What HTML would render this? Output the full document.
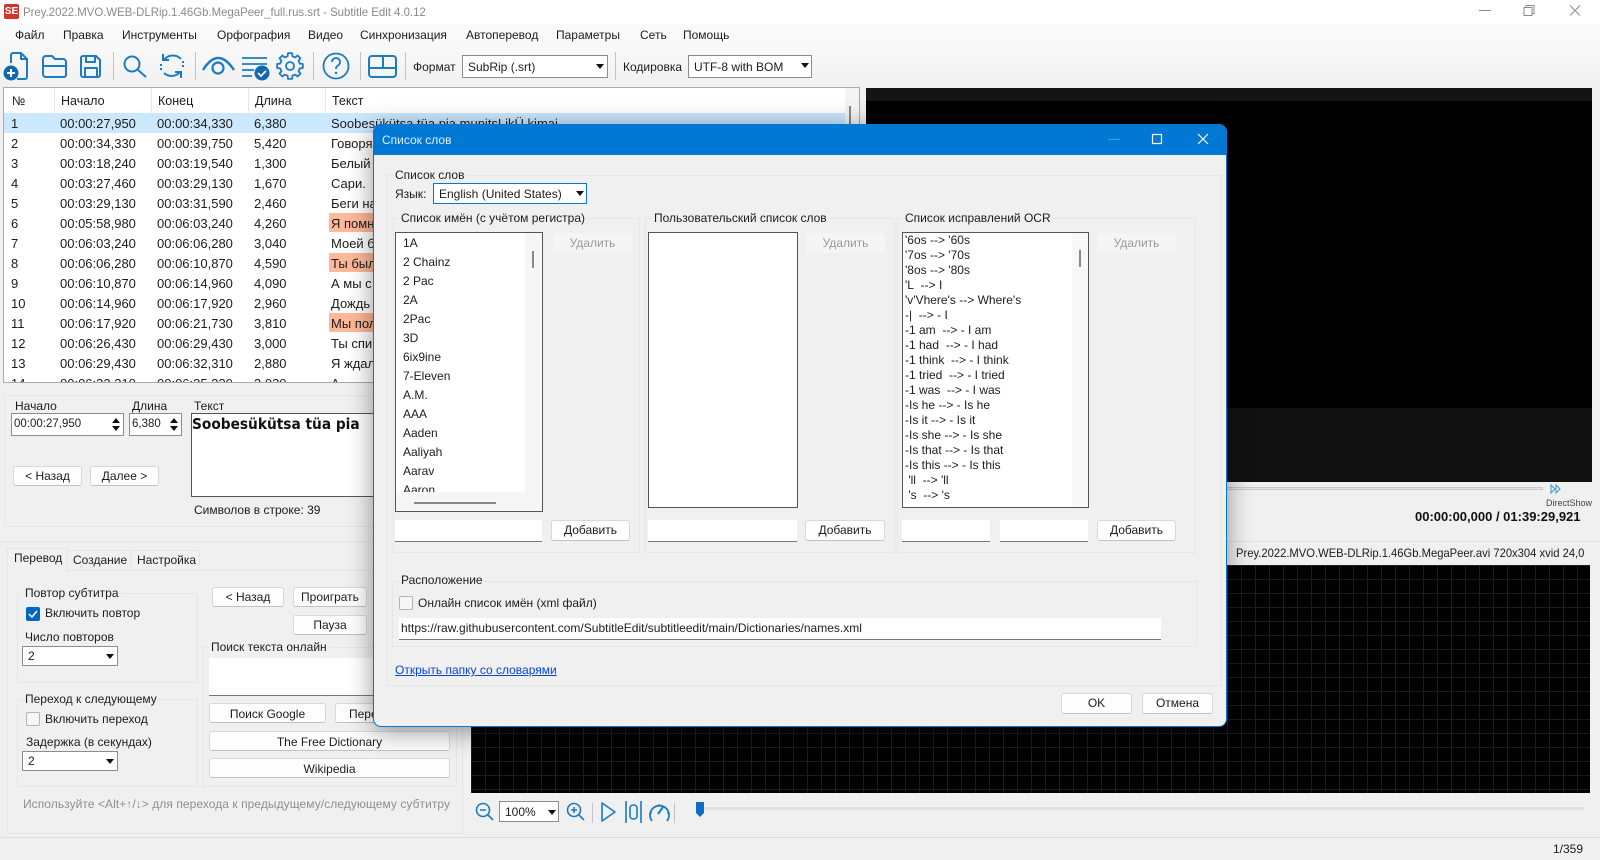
<!DOCTYPE html>
<html lang="ru"><head><meta charset="utf-8"><title>Subtitle Edit</title>
<style>
html,body{margin:0;padding:0;width:1600px;height:860px;overflow:hidden;background:#f0f0f0}
body{position:relative;font:12px "Liberation Sans","DejaVu Sans",sans-serif;color:#1c1c1c}
div,span{position:absolute;box-sizing:border-box}
.t{white-space:nowrap;line-height:16px;height:16px}
.lb{white-space:nowrap;line-height:16px;height:16px;background:#f0f0f0;padding:0 2px}
.b{background:#fdfdfd;border:1px solid #d8d8d8;border-bottom-color:#c2c2c2;border-radius:3px;text-align:center;white-space:nowrap;overflow:hidden}
.d{background:#f5f5f5;border-radius:3px;color:#9a9a9a;text-align:center;height:20px;line-height:20px;top:233px;width:79px}
.g{border:1px solid #e6e6e6}
.c{background:#fff;border:1px solid #8d8d8d;padding-left:5px;white-space:nowrap}
.a{width:0;height:0;border-left:4px solid transparent;border-right:4px solid transparent;border-top:5px solid #111}
.u{width:0;height:0;border-left:4px solid transparent;border-right:4px solid transparent;border-bottom:5px solid #111}
.i{background:#fff;border-bottom:1px solid #777}
.l{background:#fff;border:1px solid #555;overflow:hidden}
.cb{width:14px;height:14px;border:1px solid #b5b5b5;border-radius:2px;background:#f6f6f6}
.r{left:4px;width:841px;height:20px;font-size:13px}
.r span{white-space:nowrap;line-height:21px;top:0}
.r .n{left:7px}.r .s{left:56px}.r .e{left:153px}.r .m{left:250px}.r .x{left:327px}
.o{left:325px;width:516px;height:19px;background:#ffb899}
</style></head><body>

<!-- window title + gradient -->
<div style="left:0;top:0;width:1600px;height:24px;background:#fff"></div>
<div style="left:0;top:24px;width:1600px;height:64px;background:linear-gradient(#fbfbfb,#f6f6f6 60%,#f0f0f0)"></div>
<div style="left:4px;top:4px;width:15px;height:15px;background:#d5322c;border-radius:2px;color:#fff;font:bold 10px/15px 'Liberation Sans',sans-serif;text-align:center">SE</div>
<span class="t" style="left:23px;top:4px;color:#8a8a8a;font-size:12px;transform-origin:0 0;transform:scaleX(.95)">Prey.2022.MVO.WEB-DLRip.1.46Gb.MegaPeer_full.rus.srt - Subtitle Edit 4.0.12</span>
<svg style="position:absolute;left:1470px;top:0" width="130" height="24" fill="none" stroke="#8a8a8a" stroke-width="1"><path d="M9 10.5H21"/><path d="M54 7.5h8v8h-8zM56 7.5V5.500h8v8h-2"/><path d="M100 5.500L110 15.500M110 5.500L100 15.500"/></svg>

<!-- menu -->
<span class="t" style="left:15px;top:27px">Файл</span>
<span class="t" style="left:63px;top:27px">Правка</span>
<span class="t" style="left:122px;top:27px">Инструменты</span>
<span class="t" style="left:217px;top:27px">Орфография</span>
<span class="t" style="left:308px;top:27px">Видео</span>
<span class="t" style="left:360px;top:27px">Синхронизация</span>
<span class="t" style="left:466px;top:27px">Автоперевод</span>
<span class="t" style="left:556px;top:27px">Параметры</span>
<span class="t" style="left:640px;top:27px">Сеть</span>
<span class="t" style="left:683px;top:27px">Помощь</span>

<!-- icons -->
<svg style="position:absolute;left:0;top:0" width="1600" height="860" fill="none" stroke="#1b7cc4" stroke-width="2">
<path d="M11 63V55a2 2 0 0 1 2-2h8l6 6v18a2 2 0 0 1-2 2h-8M21 53v6h6" stroke-linejoin="round"/>
<circle cx="11" cy="73" r="7.500" fill="#1268ae" stroke="none"/><path d="M7 73h8M11 69v8" stroke="#fff" stroke-width="2"/>
<path d="M43 74V59a3 3 0 0 1 3-3h6l3 3h8a3 3 0 0 1 3 3v13a2 2 0 0 1-2 2H46a3 3 0 0 1-3-3zM43 66h23" stroke-linejoin="round"/>
<path d="M81 58a2 2 0 0 1 2-2h13l4 4v15a2 2 0 0 1-2 2H83a2 2 0 0 1-2-2zM86 56v6h9v-6M85 77v-9h12v9" stroke-linejoin="round"/>
<circle cx="132" cy="64" r="7.500"/><path d="M138 70l8 7"/>
<path d="M164 60A11 11 0 0 1 181 59M180 72A11 11 0 0 1 164 73M163 54v6h6M181 78v-6h-6"/>
<path d="M161 64v7M183 61v7" stroke-dasharray="2 2"/>
<path d="M203 70Q218 46 234 70" stroke-width="2.400"/><circle cx="218" cy="68" r="5.500" stroke-width="2.200"/>
<path d="M242 58h25M242 64h25M242 70h12M242 76h10" stroke-width="1.800"/>
<circle cx="262" cy="73" r="7.500" fill="#1268ae" stroke="none"/><path d="M258 73l3 3 5-5" stroke="#fff" stroke-width="1.800"/>
<polygon transform="translate(290 66)" stroke-width="1.800" stroke-linejoin="round" points="12.84,-2.03 12.84,2.03 9.7,2.42 8.57,5.15 10.52,7.64 7.64,10.52 5.15,8.57 2.42,9.7 2.03,12.84 -2.03,12.84 -2.42,9.7 -5.15,8.57 -7.64,10.52 -10.52,7.64 -8.57,5.15 -9.7,2.42 -12.84,2.03 -12.84,-2.03 -9.7,-2.42 -8.57,-5.15 -10.52,-7.64 -7.64,-10.52 -5.15,-8.57 -2.42,-9.7 -2.03,-12.84 2.03,-12.84 2.42,-9.7 5.15,-8.57 7.64,-10.52 10.52,-7.64 8.57,-5.15 9.7,-2.42"/>
<circle cx="290" cy="66" r="4" stroke-width="1.800"/>
<circle cx="336" cy="66" r="12.500" stroke-width="1.800"/>
<path d="M332 62a4 4 0 1 1 6 3.500c-1.500 1-2 1.500-2 3.500" stroke-width="1.800"/><circle cx="336" cy="73" r="1.200" fill="#1b7cc4" stroke="none"/>
<rect x="369" y="56" width="27" height="21" rx="3"/><path d="M369 68h27M383 56v12"/>
<g stroke="#c4c4c4" stroke-width="1"><path d="M113.500 52v28M195.500 52v28M313.500 52v28M360.500 52v28M405.500 52v28M615.500 52v28M592.500 803v20M674.500 803v20"/></g>
<circle cx="483" cy="810" r="6.500" stroke-width="1.600"/><path d="M488 815l5 5M480 810h6" stroke-width="1.600"/>
<circle cx="574" cy="810" r="6.500" stroke-width="1.600"/><path d="M579 815l5 5M571 810h6M574 807v6" stroke-width="1.600"/>
<path d="M602 803v18l13-9z" stroke-width="1.600" stroke-linejoin="round"/>
<path d="M626 801v22M641 801v22" stroke-width="1.600"/><rect x="630" y="805" width="7" height="14" rx="3" stroke-width="1.600"/>
<path d="M652 821a9.500 9.500 0 1 1 15 0" stroke-width="1.800"/><path d="M658 814l5-7" stroke-width="2"/><path d="M650 813h2M667 813h2M659 804v2" stroke-width="1.200"/>
<path d="M1551 485v8l4-4zM1556 485v8l4-4z" stroke-width="1" stroke="#3a93d6"/>
</svg>

<!-- format combos -->
<span class="t" style="left:413px;top:59px">Формат</span>
<div class="c" style="left:462px;top:55px;width:146px;height:23px;line-height:22px">SubRip (.srt)</div>
<span class="a" style="left:596px;top:64px"></span>
<span class="t" style="left:623px;top:59px">Кодировка</span>
<div class="c" style="left:688px;top:55px;width:124px;height:23px;line-height:22px">UTF-8 with BOM</div>
<span class="a" style="left:801px;top:63px"></span>

<!-- subtitle table -->
<div style="left:3px;top:87px;width:857px;height:296px;background:#fff;border:1px solid #aaa;overflow:hidden;font-size:12.500px">
 <div style="left:0;top:0;width:855px;height:25px;background:#fff"></div>
 <div style="left:50px;top:0;width:1px;height:25px;background:#e5e5e5"></div>
 <div style="left:147px;top:0;width:1px;height:25px;background:#e5e5e5"></div>
 <div style="left:244px;top:0;width:1px;height:25px;background:#e5e5e5"></div>
 <div style="left:321px;top:0;width:1px;height:25px;background:#e5e5e5"></div>
 <span class="t" style="left:8px;top:5px">№</span>
 <span class="t" style="left:57px;top:5px">Начало</span>
 <span class="t" style="left:154px;top:5px">Конец</span>
 <span class="t" style="left:251px;top:5px">Длина</span>
 <span class="t" style="left:328px;top:5px">Текст</span>
 <div style="left:841px;top:0;width:15px;height:294px;background:#f4f4f4"></div>
 <div style="left:845px;top:18px;width:2px;height:24px;background:#888"></div>
</div>
<div style="left:4px;top:113px;width:841px;height:20px;background:#cce8ff"></div>
<div style="left:0;top:0;width:860px;height:382px;overflow:hidden">
<div class="r" style="top:113px"><span class="n">1</span><span class="s">00:00:27,950</span><span class="e">00:00:34,330</span><span class="m">6,380</span><span class="x">Soobesükütsa tüa pia munitsLikÜ kimai</span></div>
<div class="r" style="top:133px"><span class="n">2</span><span class="s">00:00:34,330</span><span class="e">00:00:39,750</span><span class="m">5,420</span><span class="x">Говоря</span></div>
<div class="r" style="top:153px"><span class="n">3</span><span class="s">00:03:18,240</span><span class="e">00:03:19,540</span><span class="m">1,300</span><span class="x">Белый</span></div>
<div class="r" style="top:173px"><span class="n">4</span><span class="s">00:03:27,460</span><span class="e">00:03:29,130</span><span class="m">1,670</span><span class="x">Сари.</span></div>
<div class="r" style="top:193px"><span class="n">5</span><span class="s">00:03:29,130</span><span class="e">00:03:31,590</span><span class="m">2,460</span><span class="x">Беги на</span></div>
<div class="r" style="top:213px"><span class="o"></span><span class="n">6</span><span class="s">00:05:58,980</span><span class="e">00:06:03,240</span><span class="m">4,260</span><span class="x">Я помню</span></div>
<div class="r" style="top:233px"><span class="n">7</span><span class="s">00:06:03,240</span><span class="e">00:06:06,280</span><span class="m">3,040</span><span class="x">Моей б</span></div>
<div class="r" style="top:253px"><span class="o"></span><span class="n">8</span><span class="s">00:06:06,280</span><span class="e">00:06:10,870</span><span class="m">4,590</span><span class="x">Ты был</span></div>
<div class="r" style="top:273px"><span class="n">9</span><span class="s">00:06:10,870</span><span class="e">00:06:14,960</span><span class="m">4,090</span><span class="x">А мы с</span></div>
<div class="r" style="top:293px"><span class="n">10</span><span class="s">00:06:14,960</span><span class="e">00:06:17,920</span><span class="m">2,960</span><span class="x">Дождь</span></div>
<div class="r" style="top:313px"><span class="o"></span><span class="n">11</span><span class="s">00:06:17,920</span><span class="e">00:06:21,730</span><span class="m">3,810</span><span class="x">Мы пол</span></div>
<div class="r" style="top:333px"><span class="n">12</span><span class="s">00:06:26,430</span><span class="e">00:06:29,430</span><span class="m">3,000</span><span class="x">Ты спи</span></div>
<div class="r" style="top:353px"><span class="n">13</span><span class="s">00:06:29,430</span><span class="e">00:06:32,310</span><span class="m">2,880</span><span class="x">Я ждал</span></div>
<div class="r" style="top:373px"><span class="n">14</span><span class="s">00:06:32,310</span><span class="e">00:06:35,330</span><span class="m">3,020</span><span class="x">А</span></div>
</div>

<!-- video -->
<div style="left:866px;top:88px;width:726px;height:394px;background:#000"></div>
<div style="left:866px;top:88px;width:726px;height:13px;background:#141414"></div>
<div style="left:866px;top:408px;width:726px;height:74px;background:#111"></div>
<div style="left:1200px;top:487px;width:343px;height:3px;background:#e6e6e6;border:1px solid #c8c8c8"></div>
<span class="t" style="left:1546px;top:495px;font-size:9px;color:#444">DirectShow</span>
<span class="t" style="left:1415px;top:509px;font-weight:bold;font-size:13px;color:#111">00:00:00,000 / 01:39:29,921</span>
<div style="left:1200px;top:541px;width:400px;height:1px;background:#e0e0e0"></div>
<span class="t" style="left:1236px;top:545px;font-size:12px;transform-origin:0 0;transform:scaleX(.935)">Prey.2022.MVO.WEB-DLRip.1.46Gb.MegaPeer.avi 720x304 xvid 24,0</span>
<div style="left:471px;top:565px;width:1119px;height:228px;background-color:#000;background-image:linear-gradient(#1c1c1c 1px,transparent 1px),linear-gradient(90deg,#1c1c1c 1px,transparent 1px);background-size:14px 14px"></div>
<div class="c" style="left:499px;top:801px;width:60px;height:21px;line-height:20px">100%</div>
<span class="a" style="left:548px;top:810px"></span>
<div style="left:704px;top:807px;width:880px;height:3px;background:#e0e0e0"></div>
<svg style="position:absolute;left:695px;top:802px" width="10" height="16"><path d="M1 0h8v11l-4 4-4-4z" fill="#0b6cc9"/></svg>
<div style="left:0;top:837px;width:1600px;height:1px;background:#dcdcdc"></div>
<span class="t" style="left:1553px;top:841px">1/359</span>

<!-- edit panel -->
<div class="g" style="left:4px;top:395px;width:456px;height:132px"></div>
<span class="t" style="left:15px;top:398px">Начало</span>
<div class="c" style="left:11px;top:413px;width:113px;height:23px;line-height:21px;padding-left:2px;font-size:11.500px">00:00:27,950</div>
<span class="u" style="left:112px;top:418px"></span><span class="a" style="left:112px;top:426px"></span>
<span class="t" style="left:132px;top:398px">Длина</span>
<div class="c" style="left:129px;top:413px;width:53px;height:23px;line-height:20px;padding-left:2px;font-size:11.500px">6,380</div>
<span class="u" style="left:170px;top:418px"></span><span class="a" style="left:170px;top:426px"></span>
<span class="t" style="left:194px;top:398px">Текст</span>
<div class="l" style="left:191px;top:413px;width:300px;height:84px"><span style="left:0;top:0;font:bold 15px/21px 'DejaVu Sans',sans-serif;color:#111;white-space:nowrap;transform-origin:0 0;transform:scaleX(.915)">Soobesükütsa tüa pia</span></div>
<div class="b" style="left:13px;top:466px;width:69px;height:20px;line-height:18px">&lt; Назад</div>
<div class="b" style="left:90px;top:466px;width:69px;height:20px;line-height:18px">Далее &gt;</div>
<span class="t" style="left:194px;top:502px">Символов в строке: 39</span>

<!-- tabs -->
<div style="left:0;top:541px;width:470px;height:1px;background:#e6e6e6"></div>
<div class="g" style="left:7px;top:570px;width:456px;height:264px"></div>
<div class="g" style="left:7px;top:548px;width:61px;height:23px;border-bottom:0;background:#f0f0f0"></div>
<div class="g" style="left:68px;top:550px;width:63px;height:21px;border-left:0"></div>
<div class="g" style="left:131px;top:550px;width:69px;height:21px;border-left:0"></div>
<span class="t" style="left:14px;top:550px">Перевод</span>
<span class="t" style="left:73px;top:552px">Создание</span>
<span class="t" style="left:137px;top:552px">Настройка</span>

<div class="g" style="left:17px;top:593px;width:181px;height:90px"></div>
<span class="lb" style="left:23px;top:585px">Повтор субтитра</span>
<div class="cb" style="left:26px;top:607px;background:#0067c0;border-color:#0067c0"></div>
<svg style="position:absolute;left:26px;top:607px" width="14" height="14" fill="none"><path d="M3 7l3 3 5-6" stroke="#fff" stroke-width="1.500"/></svg>
<span class="t" style="left:45px;top:605px">Включить повтор</span>
<span class="t" style="left:25px;top:629px">Число повторов</span>
<div class="c" style="left:22px;top:646px;width:96px;height:20px;line-height:19px">2</div>
<span class="a" style="left:106px;top:654px"></span>

<div class="g" style="left:17px;top:699px;width:181px;height:88px"></div>
<span class="lb" style="left:23px;top:691px">Переход к следующему</span>
<div class="cb" style="left:26px;top:712px"></div>
<span class="t" style="left:45px;top:711px">Включить переход</span>
<span class="t" style="left:26px;top:734px">Задержка (в секундах)</span>
<div class="c" style="left:22px;top:751px;width:96px;height:20px;line-height:19px">2</div>
<span class="a" style="left:106px;top:759px"></span>

<div class="b" style="left:212px;top:587px;width:72px;height:20px;line-height:18px">&lt; Назад</div>
<div class="b" style="left:293px;top:587px;width:74px;height:20px;line-height:18px">Проиграть</div>
<div class="b" style="left:293px;top:615px;width:74px;height:20px;line-height:18px">Пауза</div>
<div class="g" style="left:203px;top:647px;width:254px;height:140px"></div>
<span class="lb" style="left:209px;top:639px">Поиск текста онлайн</span>
<div class="i" style="left:209px;top:658px;width:241px;height:38px"></div>
<div class="b" style="left:209px;top:703px;width:117px;height:20px;line-height:20px">Поиск Google</div>
<div class="b" style="left:335px;top:703px;width:115px;height:20px;line-height:20px;text-align:left;padding-left:13px">Перевод</div>
<div class="b" style="left:209px;top:731px;width:241px;height:20px;line-height:20px">The Free Dictionary</div>
<div class="b" style="left:209px;top:758px;width:241px;height:20px;line-height:20px">Wikipedia</div>
<span class="t" style="left:23px;top:796px;color:#8f8f8f;letter-spacing:.06px">Используйте &lt;Alt+↑/↓&gt; для перехода к предыдущему/следующему субтитру</span>

<!-- dialog -->
<div style="left:373px;top:124px;width:854px;height:603px;background:#f0f0f0;border:1px solid #0078d4;border-radius:8px;box-shadow:0 4px 26px rgba(0,0,0,.42)"></div>
<div style="left:373px;top:124px;width:854px;height:31px;background:#0078d4;border-radius:8px 8px 0 0"></div>
<span class="t" style="left:382px;top:132px;color:#dff0ff">Список слов</span>
<svg style="position:absolute;left:1100px;top:128px" width="120" height="22" fill="none" stroke="#fff" stroke-width="1.200"><path d="M8 11.500H20" stroke="#3f9ade"/><rect x="52.500" y="6.500" width="9" height="9"/><path d="M98 6l10 10M108 6l-10 10"/></svg>

<div class="g" style="left:387px;top:175px;width:835px;height:511px"></div>
<span class="lb" style="left:393px;top:167px">Список слов</span>
<span class="t" style="left:395px;top:186px">Язык:</span>
<div class="c" style="left:433px;top:183px;width:154px;height:21px;border:1.500px solid #0078d4;line-height:21px">English (United States)</div>
<span class="a" style="left:576px;top:191px"></span>

<div class="g" style="left:393px;top:218px;width:247px;height:335px"></div>
<span class="lb" style="left:399px;top:210px">Список имён (с учётом регистра)</span>
<div class="l" style="left:395px;top:232px;width:148px;height:280px">
<div style="left:7px;top:0;width:120px;height:259px;overflow:hidden;line-height:19px;white-space:nowrap"><div class="t" style="top:1px;left:0;line-height:19px;height:auto">1A<br>2 Chainz<br>2 Pac<br>2A<br>2Pac<br>3D<br>6ix9ine<br>7-Eleven<br>A.M.<br>AAA<br>Aaden<br>Aaliyah<br>Aarav<br>Aaron</div></div>
<div style="left:129px;top:0;width:18px;height:278px;background:#f6f6f6"></div>
<div style="left:136px;top:18px;width:2px;height:17px;background:#888"></div>
<div style="left:0;top:259px;width:146px;height:19px;background:#f6f6f6"></div>
<div style="left:18px;top:269px;width:82px;height:2px;background:#888"></div>
</div>
<div class="d" style="left:553px">Удалить</div>
<div class="i" style="left:395px;top:520px;width:147px;height:22px"></div>
<div class="b" style="left:551px;top:520px;width:79px;height:21px;line-height:19px">Добавить</div>

<div class="g" style="left:645px;top:218px;width:250px;height:335px"></div>
<span class="lb" style="left:652px;top:210px">Пользовательский список слов</span>
<div class="l" style="left:648px;top:232px;width:150px;height:276px"></div>
<div class="d" style="left:806px">Удалить</div>
<div class="i" style="left:648px;top:520px;width:149px;height:22px"></div>
<div class="b" style="left:805px;top:520px;width:80px;height:21px;line-height:19px">Добавить</div>

<div class="g" style="left:897px;top:218px;width:299px;height:335px"></div>
<span class="lb" style="left:903px;top:210px">Список исправлений OCR</span>
<div class="l" style="left:902px;top:232px;width:187px;height:276px">
<div class="t" style="left:2px;top:0;line-height:15px;height:auto">'6os --&gt; '60s<br>'7os --&gt; '70s<br>'8os --&gt; '80s<br>'L&nbsp; --&gt; I<br>'v'Vhere's --&gt; Where's<br>-|&nbsp; --&gt; - I<br>-1 am&nbsp; --&gt; - I am<br>-1 had&nbsp; --&gt; - I had<br>-1 think&nbsp; --&gt; - I think<br>-1 tried&nbsp; --&gt; - I tried<br>-1 was&nbsp; --&gt; - I was<br>-Is he --&gt; - Is he<br>-Is it --&gt; - Is it<br>-Is she --&gt; - Is she<br>-Is that --&gt; - Is that<br>-Is this --&gt; - Is this<br>&nbsp;'ll&nbsp; --&gt; 'll<br>&nbsp;'s&nbsp; --&gt; 's</div>
<div style="left:169px;top:0;width:16px;height:274px;background:#f8f8f8"></div>
<div style="left:176px;top:17px;width:2px;height:17px;background:#888"></div>
<div style="left:0;top:270px;width:170px;height:4px;background:#fff"></div>
</div>
<div class="d" style="left:1097px">Удалить</div>
<div class="i" style="left:902px;top:520px;width:88px;height:22px"></div>
<div class="i" style="left:1000px;top:520px;width:88px;height:22px"></div>
<div class="b" style="left:1097px;top:520px;width:79px;height:21px;line-height:19px">Добавить</div>

<div class="g" style="left:392px;top:581px;width:805px;height:66px"></div>
<span class="lb" style="left:399px;top:572px">Расположение</span>
<div class="cb" style="left:399px;top:596px"></div>
<span class="t" style="left:418px;top:595px">Онлайн список имён (xml файл)</span>
<div class="i" style="left:399px;top:618px;width:762px;height:22px;line-height:20px;padding-left:2px;white-space:nowrap">https://raw.githubusercontent.com/SubtitleEdit/subtitleedit/main/Dictionaries/names.xml</div>
<span class="t" style="left:395px;top:662px;color:#0645d6;text-decoration:underline">Открыть папку со словарями</span>
<div class="b" style="left:1061px;top:693px;width:71px;height:21px;line-height:19px">OK</div>
<div class="b" style="left:1142px;top:693px;width:71px;height:21px;line-height:19px">Отмена</div>
</body></html>
